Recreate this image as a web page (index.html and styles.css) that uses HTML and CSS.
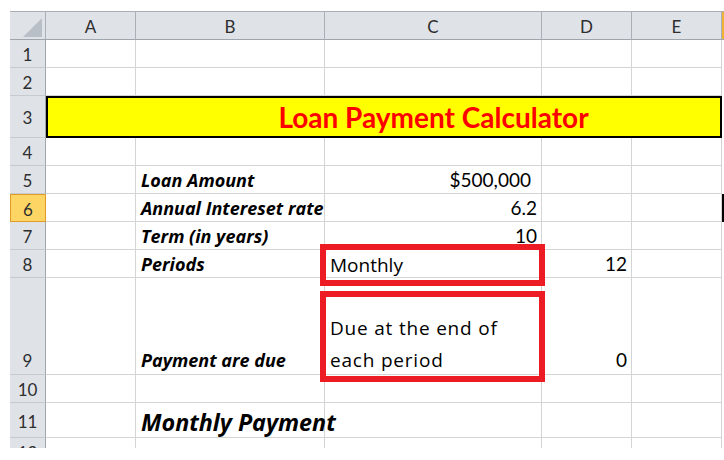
FILE: index.html
```html
<!DOCTYPE html>
<html>
<head>
<meta charset="utf-8">
<link rel="stylesheet" href="styles.css">
</head>
<body>
<div class="sheet">
  <div class="row head">
    <div class="corner"><span class="tri"></span></div>
    <div class="ch">A</div>
    <div class="ch">B</div>
    <div class="ch">C</div>
    <div class="ch">D</div>
    <div class="ch">E</div>
    <div class="ch chsel"></div>
  </div>
  <div class="row">
    <div class="rh">1</div><div class="c"></div><div class="c"></div><div class="c"></div><div class="c"></div><div class="c"></div><div class="f"></div>
  </div>
  <div class="row">
    <div class="rh">2</div><div class="c"></div><div class="c"></div><div class="c"></div><div class="c"></div><div class="c"></div><div class="f"></div>
  </div>
  <div class="row r3">
    <div class="rh">3</div>
    <div class="banner"><span class="title">Loan Payment Calculator</span></div>
    <div class="f"></div>
  </div>
  <div class="row">
    <div class="rh">4</div><div class="c"></div><div class="c"></div><div class="c"></div><div class="c"></div><div class="c"></div><div class="f"></div>
  </div>
  <div class="row">
    <div class="rh">5</div><div class="c"></div><div class="c lbl">Loan Amount</div><div class="c num cur">$500,000</div><div class="c"></div><div class="c"></div><div class="f"></div>
  </div>
  <div class="row">
    <div class="rh rhsel">6</div><div class="c"></div><div class="c lbl">Annual Intereset rate</div><div class="c num">6.2</div><div class="c"></div><div class="c"></div><div class="f active"></div>
  </div>
  <div class="row">
    <div class="rh">7</div><div class="c"></div><div class="c lbl">Term (in years)</div><div class="c num">10</div><div class="c"></div><div class="c"></div><div class="f"></div>
  </div>
  <div class="row">
    <div class="rh">8</div><div class="c"></div><div class="c lbl">Periods</div><div class="c txt">Monthly</div><div class="c num">12</div><div class="c"></div><div class="f"></div>
  </div>
  <div class="row r9">
    <div class="rh">9</div><div class="c"></div><div class="c lbl">Payment are due</div><div class="c txt wrap"><span>Due at the end of<br>each period</span></div><div class="c num">0</div><div class="c"></div><div class="f"></div>
  </div>
  <div class="row">
    <div class="rh">10</div><div class="c"></div><div class="c"></div><div class="c"></div><div class="c"></div><div class="c"></div><div class="f"></div>
  </div>
  <div class="row r11">
    <div class="rh">11</div><div class="c"></div><div class="c big">Monthly Payment</div><div class="c"></div><div class="c"></div><div class="c"></div><div class="f"></div>
  </div>
  <div class="row">
    <div class="rh">12</div><div class="c"></div><div class="c"></div><div class="c"></div><div class="c"></div><div class="c"></div><div class="f"></div>
  </div>
</div>
<div class="mark mark1"></div>
<div class="mark mark2"></div>
</body>
</html>
```

FILE: styles.css
```css
html, body {
  margin: 0;
  padding: 0;
  background: #ffffff;
}
body {
  width: 724px;
  height: 460px;
  overflow: hidden;
  font-family: Lato, "Open Sans", sans-serif;
  color: #000;
}
.sheet {
  margin: 11px 0 0 10px;
  width: 714px;
  height: 437px;
  overflow: hidden;
}
.row {
  display: grid;
  grid-template-columns: 36px 90px 189px 217px 90px 90px 2px;
  height: 28px;
}
.row > div {
  box-sizing: border-box;
  min-width: 0;
}
.head { height: 29px; }
.r3 { height: 42px; }
.r9 { height: 97px; }
.r11 { height: 35px; }

.corner, .ch {
  background: #dfe3e8;
  border-top: 1px solid #a9aeb5;
  border-bottom: 1px solid #9ea5ad;
  border-right: 1px solid #a9b0b8;
}
.corner {
  display: flex;
  justify-content: flex-end;
  align-items: flex-end;
  padding: 0 3px 2px 0;
}
.tri {
  display: block;
  width: 19px;
  height: 19px;
  background: #b9bfc6;
  clip-path: polygon(100% 0, 100% 100%, 0 100%);
}
.ch {
  display: flex;
  align-items: center;
  justify-content: center;
  font-size: 17px;
  color: #2e2e2e;
  padding-top: 1px;
}
.chsel {
  background: #f0b236;
  border-right: none;
}
.rh {
  background: #dfe3e8;
  border-right: 1px solid #9ea5ad;
  border-bottom: 1px solid #c6cbd1;
  display: flex;
  align-items: center;
  justify-content: center;
  font-size: 17px;
  color: #2e2e2e;
  padding-top: 2px;
}
.r9 .rh {
  align-items: flex-end;
  padding-bottom: 3px;
}
.rhsel {
  background: #fdd564;
  border: 1px solid #e09b2a;
}
.c {
  border-right: 1px solid #d4d4d4;
  border-bottom: 1px solid #d4d4d4;
  display: flex;
  align-items: flex-end;
  padding: 0 5px 2px 5px;
  white-space: nowrap;
  font-size: 19px;
  line-height: 22px;
}
.active { background: #000; }

.banner {
  grid-column: span 5;
  background: #ffff00;
  border: 2px solid #000;
  display: grid;
  grid-template-columns: 88px 189px 217px 1fr;
  align-items: end;
  padding-bottom: 4px;
}
.title {
  grid-column: 3;
  justify-self: center;
  white-space: nowrap;
  color: #ff0000;
  font-weight: 700;
  font-size: 28px;
  line-height: 30px;
}
.lbl {
  font-family: "Open Sans", Lato, sans-serif;
  font-weight: 700;
  font-style: italic;
  font-size: 18px;
  padding-bottom: 2px;
}
.r9 .lbl { padding-bottom: 3px; }
.num {
  justify-content: flex-end;
  padding-right: 4px;
}
.r9 .num { padding-bottom: 3px; }
.cur { padding-right: 10px; }
.txt {
  font-family: "Open Sans", Lato, sans-serif;
  font-size: 19px;
  padding-bottom: 1px;
}
.wrap {
  white-space: nowrap;
  line-height: 32px;
  padding-bottom: 0;
  letter-spacing: 0.8px;
}
.wrap span {
  margin-bottom: -2px;
}
.big {
  font-family: "Open Sans", Lato, sans-serif;
  font-weight: 700;
  font-style: italic;
  font-size: 23.3px;
  line-height: 28px;
  padding-bottom: 1px;
}
.mark {
  position: absolute;
  border: 6px solid #ed1c24;
  box-sizing: border-box;
}
.mark1 {
  left: 320px;
  top: 244px;
  width: 225px;
  height: 42px;
}
.mark2 {
  left: 320px;
  top: 291px;
  width: 225px;
  height: 91px;
}
```
